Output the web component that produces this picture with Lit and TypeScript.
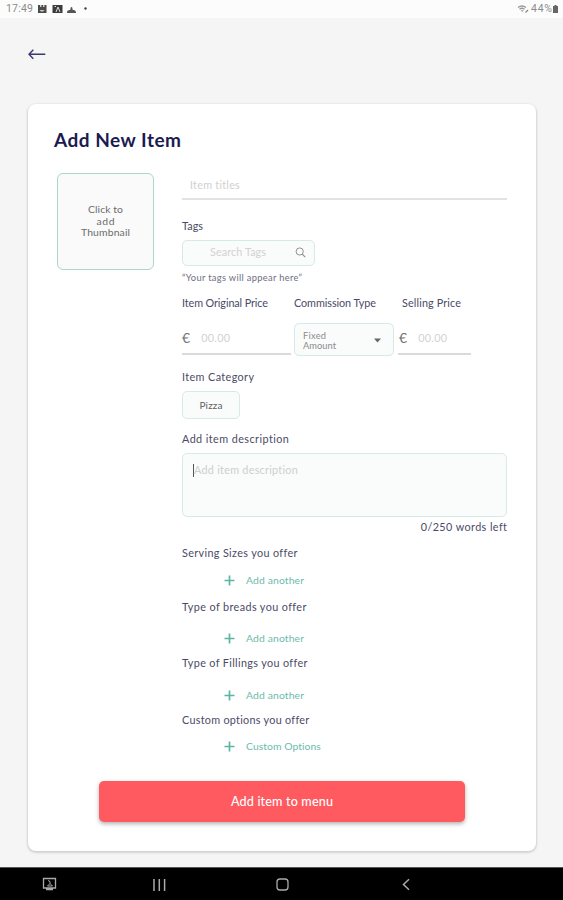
import { LitElement, html, css } from "lit";
import { customElement, property } from "lit/decorators.js";

/** A single line of text, tracked so that it spans a set width. */
@customElement("tracked-text")
class TrackedText extends LitElement {
  @property() text = "";
  @property({ type: Number }) span = 0;

  static styles = css`
    :host { display: inline-block; white-space: nowrap; }
    .run { display: inline-block; }
  `;

  firstUpdated() {
    const run = this.renderRoot.querySelector(".run") as HTMLElement;
    const natural = run.getBoundingClientRect().width;
    const gap = (this.span - natural) / Math.max(1, this.text.length - 1);
    run.style.letterSpacing = `${gap.toFixed(3)}px`;
    run.style.marginRight = `${(-gap).toFixed(3)}px`;
  }

  render() {
    return html`<span class="run">${this.text}</span>`;
  }
}

const t = (text: string, span: number) =>
  html`<tracked-text .text=${text} .span=${span}></tracked-text>`;

const plus = html`<svg class="plus" viewBox="0 0 11 11">
  <path d="M5.5 .5v10M.5 5.5h10" fill="none" stroke="#5bb5a2" stroke-width="1.7" />
</svg>`;

const groups = [
  { title: "Serving Sizes you offer", width: 115, action: "Add another", actionWidth: 58, cls: "g1" },
  { title: "Type of breads you offer", width: 124, action: "Add another", actionWidth: 58, cls: "g2" },
  { title: "Type of Fillings you offer", width: 125, action: "Add another", actionWidth: 58, cls: "g3" },
  { title: "Custom options you offer", width: 127, action: "Custom Options", actionWidth: 75, cls: "g4" },
];

@customElement("app-root")
class AppRoot extends LitElement {
  static styles = css`
    :host {
      display: flex; flex-direction: column; width: 563px; height: 900px;
      background: #f5f5f5; color: #4a4a66; overflow: hidden;
      font: 10.8px/14px Lato, "Open Sans", sans-serif;
    }
    * { box-sizing: border-box; }
    svg { display: block; flex: none; }
    .status {
      height: 18px; flex: none; background: #fcfcfc; color: #8c8c8c;
      display: flex; align-items: center; padding: 0 4px 0 6px;
      font: 10.5px/18px Roboto, sans-serif;
    }
    .glyphs { margin-left: 5px; }
    .grow { flex: 1; }
    .wifi { margin-right: 2px; }
    .bar { height: 86px; flex: none; padding: 31px 0 0 28px; }
    .card {
      width: 508px; height: 747px; flex: none; margin-left: 28px; background: #fff;
      border-radius: 8px; box-shadow: 0 1px 2px 1px #d2d2d2;
      padding: 24px 28px 0 26px;
    }
    h1 { margin: 0; height: 44px; font: 700 19px/24px Lato, sans-serif; color: #1b1b52; }
    .body { display: flex; }
    .thumb {
      width: 97px; height: 97px; margin: 1px 28px 0 3px; border: 1px solid #acd6cf;
      border-radius: 6px; background: #fafafa; color: #6c6c6c;
      display: flex; flex-direction: column; align-items: center; justify-content: center;
      line-height: 11.4px; font-size: 10.4px;
    }
    .fields { width: 325px; display: flex; flex-direction: column; align-items: flex-start; }
    .title-input {
      width: 325px; height: 28px; border-bottom: 2px solid #e2e2e2;
      padding: 6px 0 0 8px; color: #d0d0d0;
    }
    .box { border: 1px solid #d5ebe6; border-radius: 5px; background: #fafbfb; }
    .tags { margin-top: 19px; }
    .search {
      width: 133px; height: 26px; margin-top: 7px; padding: 0 8px 2px 27px;
      display: flex; align-items: center; justify-content: space-between; color: #d2d2d2;
    }
    .note { margin-top: 5px; font-size: 9.3px; color: #6e6e82; }
    .heads, .prices { display: grid; grid-template-columns: 112px 104px 1fr; width: 325px; }
    .heads { margin-top: 11px; }
    .heads .last { padding-left: 4px; }
    .prices { margin-top: 13px; height: 34px; }
    .money {
      height: 32px; border-bottom: 2px solid #dadada; display: flex; align-items: center;
      gap: 11px; width: 109px; padding-bottom: 1px; color: #d2d2d2;
    }
    .money.sell { width: 73px; padding-left: 1px; }
    .euro { font-size: 14px; color: #747474; }
    .select {
      width: 100px; height: 33px; padding: 2px 12px 0 8px; display: flex;
      align-items: center; justify-content: space-between; color: #8c8c8c;
    }
    .lines { display: flex; flex-direction: column; font-size: 9.3px; line-height: 10px; }
    .cat { margin-top: 13px; }
    .chip {
      width: 58px; height: 28px; margin-top: 7px; color: #606060; font-size: 10px;
      display: flex; align-items: center; justify-content: center;
    }
    .desc { margin-top: 13px; }
    .area {
      width: 325px; height: 64px; margin-top: 7px; padding: 9px 10px;
      display: flex; align-items: flex-start; color: #cecece;
    }
    .caret { width: 1px; height: 13px; margin-top: 1px; background: #555; flex: none; }
    .count { margin-top: 3px; align-self: flex-end; }
    .group .add {
      display: flex; align-items: center; gap: 11px; padding-left: 42px;
      color: #6dbbab; height: 14px; font-size: 10.4px;
    }
    .plus { width: 11px; height: 11px; }
    .g1 { margin-top: 12px; }
    .g1 .add { margin-top: 13px; }
    .g2 { margin-top: 13px; }
    .g2 .add { margin-top: 17px; }
    .g3 { margin-top: 11px; }
    .g3 .add { margin-top: 18px; }
    .g4 { margin-top: 11px; }
    .g4 .add { margin-top: 12px; }
    .submit {
      display: block; width: 366px; height: 41px; margin: 28px 0 0 45px; padding: 0;
      border: 0; border-radius: 5px; background: #ff5a60; color: #fff;
      box-shadow: 0 2px 4px rgba(0, 0, 0, .3); font: 500 12.6px/41px Lato, sans-serif;
      text-align: center;
    }
    .nav {
      height: 33px; margin-top: auto; background: #000; flex: none;
      border-top: 1px solid #555;
    }
  `;

  render() {
    return html`
      <div class="status">
        ${t("17:49", 27)}
        <svg class="glyphs" width="50" height="10" viewBox="0 0 50 10">
          <rect x="0" y="1" width="8.500" height="8" fill="#4a4a4a" />
          <path d="M2 1h1.500v2H2zM5 1h1.500v2H5zM1.500 6l1.500 1.500h2L6.500 6" fill="#ccc" />
          <rect x="14.500" y="1" width="10" height="8" fill="#3c3c3c" />
          <path d="M18 8l2-5 2 5M16.500 2.500h1.500" fill="none" stroke="#ddd" />
          <path d="M29 9c0-3 2-3 3-3s0-3 1.500-3 .5 3 1.500 3 3 0 3 3z" fill="#555" />
          <circle cx="47.500" cy="4.500" r="1.200" fill="#444" />
        </svg>
        <span class="grow"></span>
        <svg class="wifi" width="12" height="10" viewBox="0 0 12 10">
          <path d="M1 3.500q4-3 8 0M2.500 5.300q2.500-2 5 0" fill="none" stroke="#999" stroke-width="1.400" />
          <path d="M3.800 6.300h3L5.200 8z" fill="#999" />
          <path d="M8.500 8.500L11 6" stroke="#888" stroke-width="1.200" />
        </svg>
        ${t("44%", 21)}
        <svg width="7" height="10" viewBox="0 0 7 10">
          <path d="M2.500 1h2v1h1.500v7h-5V2h1.500z" fill="#666" />
        </svg>
      </div>
      <div class="bar">
        <svg width="18" height="11" viewBox="0 0 18 11">
          <path d="M5.300 .8L1 5.300l4.300 4.500M1 5.300h16.300" fill="none" stroke="#39396f" stroke-width="1.400" />
        </svg>
      </div>
      <main class="card">
        <h1>${t("Add New Item", 127)}</h1>
        <div class="body">
          <div class="thumb">
            ${t("Click to", 35)}${t("add", 18)}${t("Thumbnail", 49)}
          </div>
          <div class="fields">
            <div class="title-input">${t("Item titles", 50)}</div>
            <div class="tags">${t("Tags", 21)}</div>
            <div class="search box">
              ${t("Search Tags", 56)}
              <svg width="11" height="11" viewBox="0 0 11 11">
                <circle cx="4.700" cy="4.500" r="3.600" fill="none" stroke="#909090" />
                <path d="M7.300 7.200l2.900 2.900" stroke="#909090" stroke-width="1.200" />
              </svg>
            </div>
            <div class="note">${t("“Your tags will appear here”", 120)}</div>
            <div class="heads">
              <span>${t("Item Original Price", 86)}</span>
              <span>${t("Commission Type", 82)}</span>
              <span class="last">${t("Selling Price", 59)}</span>
            </div>
            <div class="prices">
              <div class="money"><span class="euro">${t("€", 9)}</span>${t("00.00", 29)}</div>
              <div class="select box">
                <div class="lines">${t("Fixed", 23)}${t("Amount", 33)}</div>
                <svg width="7" height="5" viewBox="0 0 7 5"><path d="M0 .5h7L3.500 4.500z" fill="#666" /></svg>
              </div>
              <div class="money sell"><span class="euro">${t("€", 9)}</span>${t("00.00", 29)}</div>
            </div>
            <div class="cat">${t("Item Category", 72)}</div>
            <div class="chip box">${t("Pizza", 23)}</div>
            <div class="desc">${t("Add item description", 107)}</div>
            <div class="area box"><span class="caret"></span>${t("Add item description", 104)}</div>
            <div class="count">${t("0/250 words left", 86)}</div>
            ${groups.map(
              (g) => html`<section class="group ${g.cls}">
                <div>${t(g.title, g.width)}</div>
                <div class="add">${plus}${t(g.action, g.actionWidth)}</div>
              </section>`
            )}
          </div>
        </div>
        <button class="submit">${t("Add item to menu", 102)}</button>
      </main>
      <nav class="nav">
        <svg width="563" height="32" viewBox="0 0 563 32" fill="none" stroke="#aaa" stroke-width="1.300">
          <path d="M43.500 10.500h12v9.500h-12zM46 21.500h7" />
          <path d="M48 12.500l2 1v2l2.500 2.500M50 15.500l-2.500 2.500h5" stroke-width="1" />
          <path d="M154 11v12M159.300 11v12M164.600 11v12" stroke-width="1.500" />
          <rect x="277" y="11" width="11" height="11" rx="3" />
          <path d="M409 11.200l-5.500 5.300 5.500 5.300" stroke-width="1.500" />
        </svg>
      </nav>
    `;
  }
}
